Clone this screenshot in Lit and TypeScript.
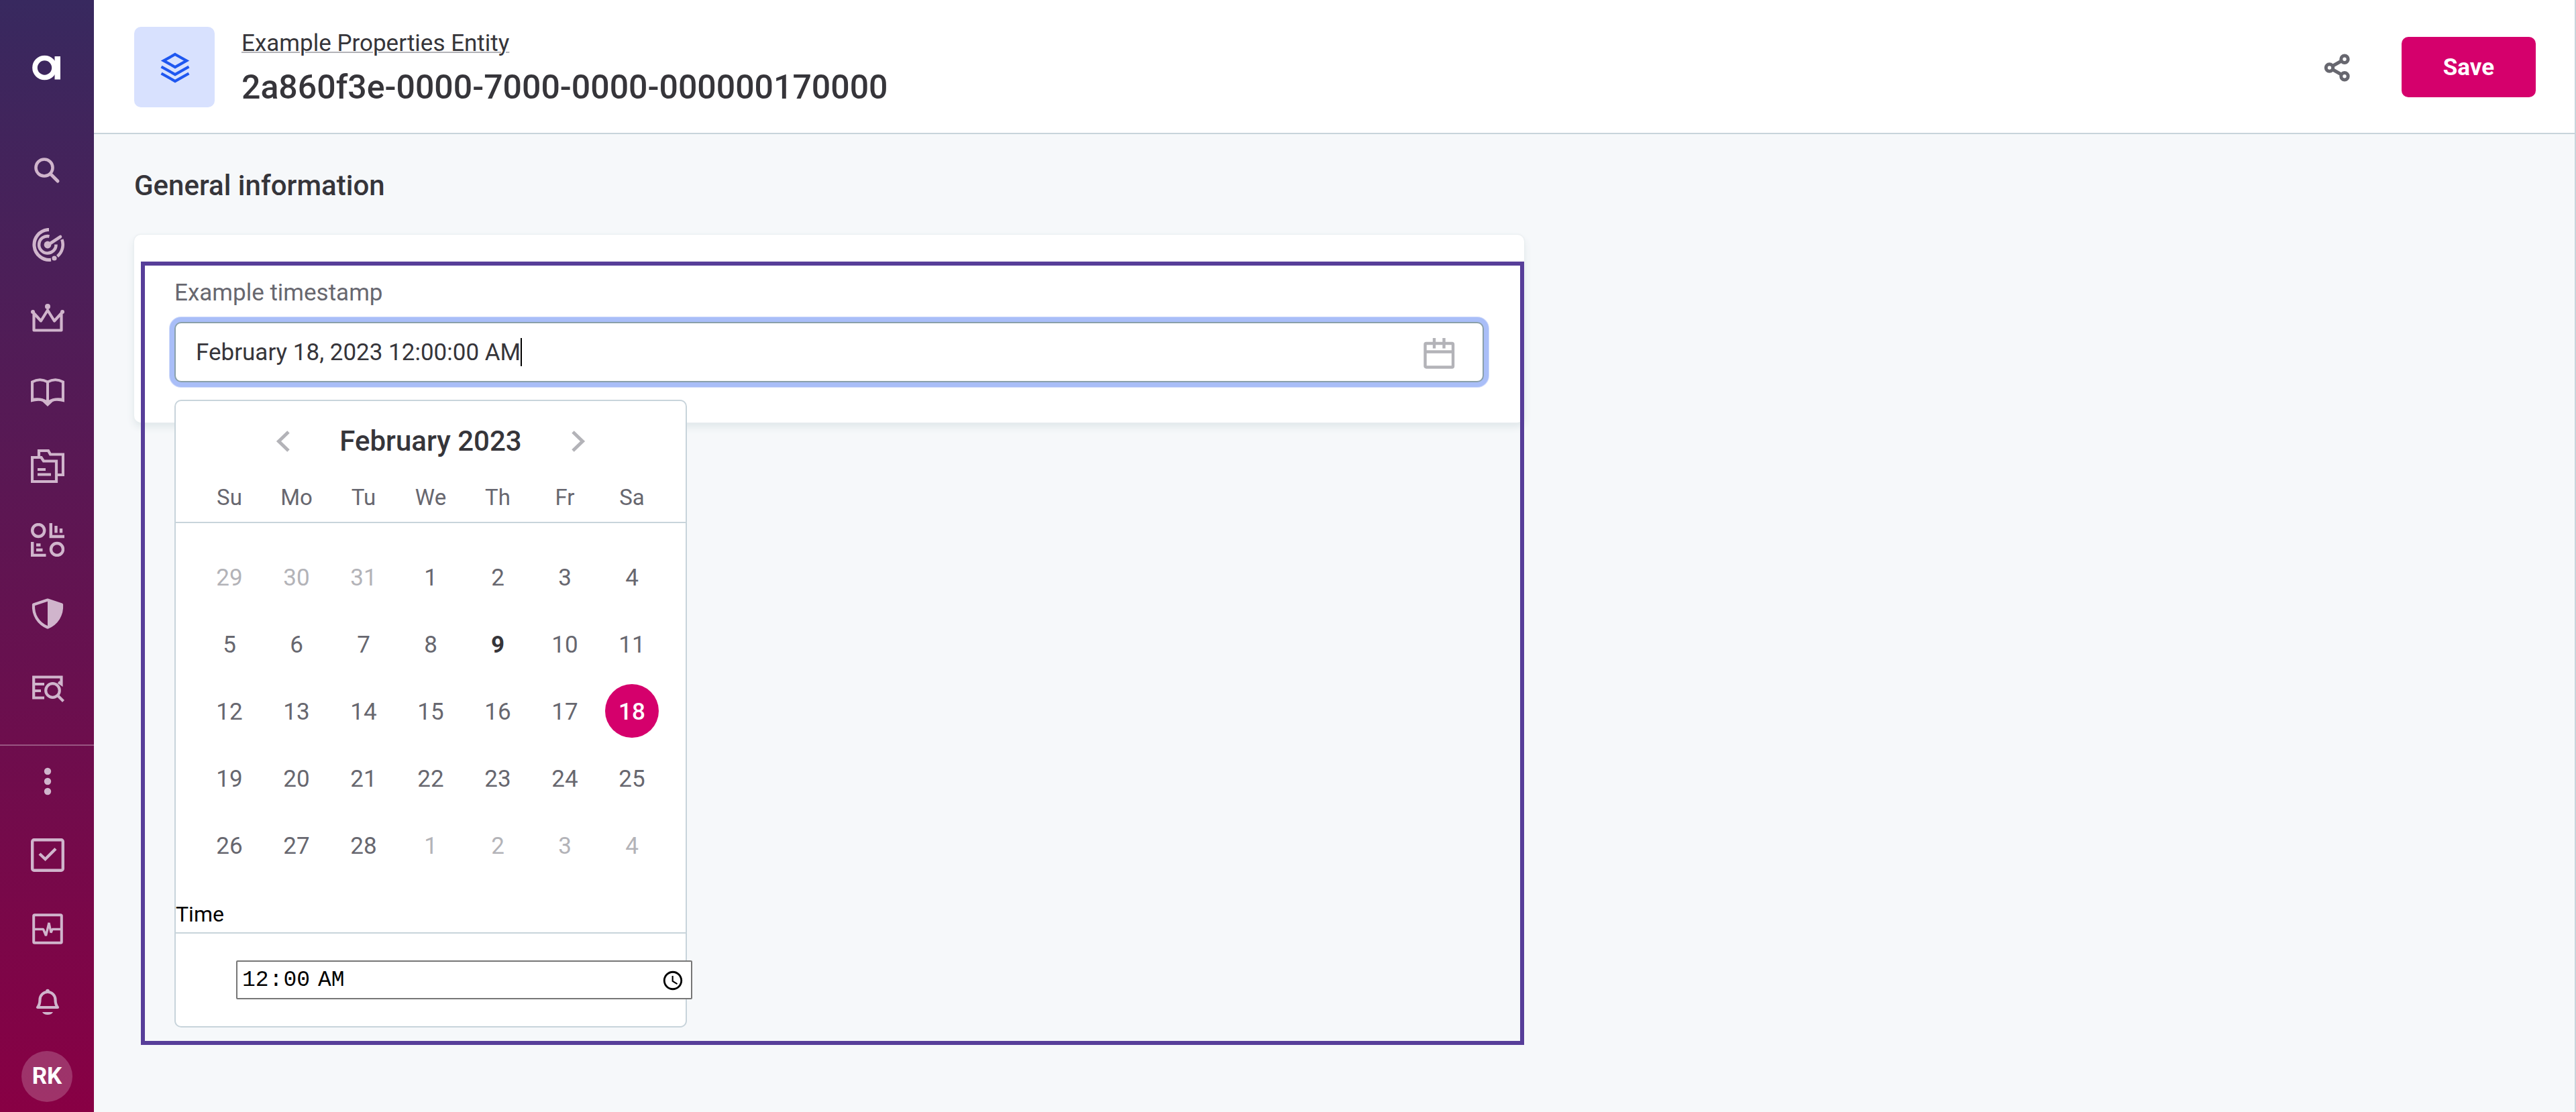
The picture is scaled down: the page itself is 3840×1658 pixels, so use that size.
import { LitElement, html, css, svg } from "lit";
import { customElement, state, query } from "lit/decorators.js";
import { classMap } from "lit/directives/class-map.js";
import { styleMap } from "lit/directives/style-map.js";

/* Every rail icon is drawn on a 50 x 50 grid. */
const icons = {
  search: svg`
    <circle cx="20" cy="20" r="12.5" fill="none" stroke="currentColor" stroke-width="4.6" />
    <path d="M29 29 L40 40" fill="none" stroke="currentColor" stroke-width="5" stroke-linecap="round" />`,
  radar: svg`
    <path d="M27 2.5 H25 A22.5 22.5 0 1 0 30 47.3" fill="none" stroke="currentColor" stroke-width="5" />
    <path d="M46.3 17 A22.5 22.5 0 0 1 39.5 42.2" fill="none" stroke="currentColor" stroke-width="4.6" />
    <path d="M27.5 12.4 A12.7 12.7 0 1 0 37.5 24.5" fill="none" stroke="currentColor" stroke-width="4.6" />
    <path d="M25 25.5 L44 13" fill="none" stroke="currentColor" stroke-width="4.6" stroke-linecap="round" />
    <circle cx="25" cy="25" r="5.4" fill="currentColor" />
    <circle cx="35" cy="45" r="3.6" fill="currentColor" />`,
  crown: svg`
    <path d="M4.5 17 V42.5 H45.5 V17 L35 28.5 L25 12.5 L15 28.5 Z" fill="none" stroke="currentColor" stroke-width="4.2" stroke-linejoin="round" />
    <circle cx="25" cy="7" r="4" fill="currentColor" />
    <circle cx="3" cy="15" r="3" fill="currentColor" />
    <circle cx="47" cy="15" r="3" fill="currentColor" />`,
  book: svg`
    <path d="M2 37 V9.5 Q13.5 3 25 9.5 Q36.5 3 48 9.5 V37" fill="none" stroke="currentColor" stroke-width="4.2" />
    <path d="M25 9.5 V40" fill="none" stroke="currentColor" stroke-width="4" />
    <path d="M0 39.5 V34.5 Q14 31 25 37.5 Q36 31 50 34.5 V39.5 Q38 36.5 32.5 39 L25 46 L17.5 39 Q12 36.5 0 39.5 Z" fill="currentColor" />`,
  folders: svg`
    <path d="M2 12 H15.5 L19 17.5 H38 V48 H2 Z" fill="none" stroke="currentColor" stroke-width="4.2" />
    <path d="M12 12 V2 H26 L29 7.500 H48 V38 H39" fill="none" stroke="currentColor" stroke-width="4.2" />
    <path d="M10 30 H22 M10 37.5 H30" fill="none" stroke="currentColor" stroke-width="4.2" />`,
  charts: svg`
    <circle cx="11.2" cy="11" r="9" fill="none" stroke="currentColor" stroke-width="4.4" />
    <circle cx="39" cy="39" r="9" fill="none" stroke="currentColor" stroke-width="4.4" />
    <path d="M29.8 0 V20 H50 M2.2 28 V48 H22.5" fill="none" stroke="currentColor" stroke-width="4.4" />
    <path d="M37.5 4 V14.5 M45 8 V14.5 M8 32.5 H14.5 M8 40 H17.5" fill="none" stroke="currentColor" stroke-width="4.4" />`,
  shield: svg`
    <path d="M25 4.500 L46 11.500 C47 27 39 39.500 25 45.500 C11 39.500 3 27 4 11.500 Z" fill="none" stroke="currentColor" stroke-width="4.2" stroke-linejoin="round" />
    <path d="M25 4.5 L46 11.5 C47 27 39 39.5 25 45.5 Z" fill="currentColor" />`,
  inspect: svg`
    <g fill="none" stroke="currentColor" stroke-width="4.2">
      <path d="M20 40.5 H4.2 V9.5 H45.5 V20 L41 17" />
      <path d="M5 20 H20 M5 30 H15" />
      <circle cx="32.5" cy="29.500" r="10.300" />
      <path d="M39.500 36.500 L48.500 45.500" />
    </g>`,
  more: svg`
    <circle cx="25" cy="10" r="5.2" fill="currentColor" />
    <circle cx="25" cy="25" r="5.2" fill="currentColor" />
    <circle cx="25" cy="40" r="5.2" fill="currentColor" />`,
  tasks: svg`
    <g fill="none" stroke="currentColor" stroke-width="4.4">
      <rect x="2.2" y="2.2" width="45.6" height="45.6" rx="2.5" />
      <path d="M13 23 L21.500 31 L37 15.500" />
    </g>`,
  pulse: svg`
    <rect x="4.2" y="4.2" width="41.6" height="41.6" rx="1.5" fill="none" stroke="currentColor" stroke-width="4" />
    <path d="M5 25.5 H18.500 L22.500 35 L27 16 L30 30.500 L32 25.500 H45" fill="none" stroke="currentColor" stroke-width="3.4" stroke-linejoin="bevel" />`,
  bell: svg`
    <path d="M10 32 H40 C37.5 29 36.500 26.500 36.500 20.500 A11.500 11.500 0 0 0 13.500 20.500 C13.500 26.500 12.500 29 10 32 Z" fill="none" stroke="currentColor" stroke-width="4.2" stroke-linejoin="round" />
    <circle cx="25" cy="7.5" r="2.8" fill="currentColor" />
    <path d="M17 39 H33 A8.500 6 0 0 1 17 39 Z" fill="currentColor" />`,
};

type IconName = keyof typeof icons;

const primaryNav: { icon: IconName; label: string }[] = [
  { icon: "search", label: "Search" },
  { icon: "radar", label: "Discover" },
  { icon: "crown", label: "Governance" },
  { icon: "book", label: "Glossary" },
  { icon: "folders", label: "Catalog" },
  { icon: "charts", label: "Reports" },
  { icon: "shield", label: "Policies" },
  { icon: "inspect", label: "Data quality" },
];

const secondaryNav: { icon: IconName; label: string }[] = [
  { icon: "more", label: "More" },
  { icon: "tasks", label: "Tasks" },
  { icon: "pulse", label: "Processing" },
  { icon: "bell", label: "Notifications" },
];

@customElement("side-rail")
export class SideRail extends LitElement {
  static styles = css`
    :host {
      display: flex;
      flex-direction: column;
      flex: 0 0 140px;
      overflow: hidden;
      background: linear-gradient(#38295f, #880044);
      color: #d0b5cc;
    }
    .logo {
      display: grid;
      place-items: center;
      height: 200px;
      color: #fff;
    }
    .group {
      display: flex;
      flex-direction: column;
    }
    .secondary {
      margin-top: auto;
      box-shadow: inset 0 2px rgba(255, 255, 255, 0.3);
    }
    .item {
      display: grid;
      place-items: center;
      height: 110px;
      padding: 0 0 0 2px;
      border: 0;
      background: none;
      color: inherit;
      text-decoration: none;
      cursor: pointer;
    }
    .glyph {
      width: 50px;
      height: 50px;
    }
    .account {
      height: 108px;
      padding: 2px 0 0;
    }
    .avatar {
      display: grid;
      place-items: center;
      width: 76px;
      height: 76px;
      border-radius: 50%;
      background: rgba(255, 255, 255, 0.2);
      color: #fff;
      font: 700 35px/40px Roboto, sans-serif;
    }
  `;

  render() {
    return html`
      <a class="logo" href="#" aria-label="Home">
        <svg class="glyph" viewBox="0 0 50 50">
          <circle cx="21.500" cy="26" r="14.5" fill="none" stroke="currentColor" stroke-width="7.6" />
          <path d="M36.500 9 H45 V43.500 H36.500 Z" fill="currentColor" />
        </svg>
      </a>
      <nav class="group" aria-label="Main">
        ${primaryNav.map(
          (n) => html`<a class="item" href="#" aria-label=${n.label}>
            <svg class="glyph" viewBox="0 0 50 50">${icons[n.icon]}</svg>
          </a>`
        )}
      </nav>
      <div class="group secondary">
        ${secondaryNav.map(
          (n) => html`<button class="item" type="button" aria-label=${n.label}>
            <svg class="glyph" viewBox="0 0 50 50">${icons[n.icon]}</svg>
          </button>`
        )}
        <button class="item account" type="button"><span class="avatar">RK</span></button>
      </div>
    `;
  }
}

@customElement("page-header")
export class PageHeader extends LitElement {
  static styles = css`
    :host {
      box-sizing: border-box;
      display: flex;
      align-items: center;
      gap: 40px;
      height: 200px;
      padding: 2px 58px 0 60px;
      background: #fff;
      border-bottom: 2px solid #c8d4db;
      color: #36353a;
    }
    .tile {
      display: grid;
      place-items: center;
      width: 120px;
      height: 120px;
      border-radius: 10px;
      background: #d8e1fe;
      color: #1f57f0;
    }
    .tile svg {
      width: 50px;
      height: 50px;
    }
    .titles {
      flex: 1;
      min-width: 0;
    }
    .type {
      display: inline-block;
      color: inherit;
      font-size: 35px;
      line-height: 50px;
      text-decoration: underline;
      text-decoration-color: #b3b3b8;
      text-decoration-thickness: 2px;
    }
    .name {
      margin: 10px 0 0;
      font-size: 50px;
      line-height: 60px;
      font-weight: 500;
    }
    .share {
      display: grid;
      padding: 0;
      margin-right: 30px;
      border: 0;
      background: none;
      color: #67676f;
      cursor: pointer;
    }
    .share svg {
      width: 50px;
      height: 50px;
    }
    .save {
      width: 200px;
      height: 90px;
      padding: 2px 0 0;
      border: 0;
      border-radius: 10px;
      background: #d5006c;
      color: #fff;
      font: 700 35px/50px Roboto, sans-serif;
      cursor: pointer;
    }
  `;

  render() {
    return html`
      <div class="tile">
        <svg viewBox="0 0 50 50" fill="none" stroke="currentColor" stroke-width="4.2">
          <path d="M26 6 L43 15.5 L26 25 L9 15.5 Z" />
          <path d="M5.500 24.500 L26 36 L46.500 24.500" />
          <path d="M5.500 34.500 L26 46 L46.500 34.500" />
        </svg>
      </div>
      <div class="titles">
        <a class="type" href="#">Example Properties Entity</a>
        <h1 class="name">2a860f3e-0000-7000-0000-000000170000</h1>
      </div>
      <button class="share" type="button" aria-label="Share">
        <svg viewBox="0 0 50 50" fill="none" stroke="currentColor" stroke-width="5">
          <path d="M12.500 26 L35 13.300 M12.500 26 L35 38.700" />
          <g fill="#fff">
            <circle cx="12.5" cy="26" r="5.2" />
            <circle cx="35" cy="13.3" r="5.2" />
            <circle cx="35" cy="38.7" r="5.2" />
          </g>
        </svg>
      </button>
      <button class="save" type="button">Save</button>
    `;
  }
}

const weekdays = ["Su", "Mo", "Tu", "We", "Th", "Fr", "Sa"];

/* The five weeks that show February 2023, from January 29 to March 4. */
const weeks = Array.from({ length: 5 }, (_, w) =>
  Array.from({ length: 7 }, (_, d) => {
    const date = new Date(2023, 0, 29 + w * 7 + d);
    return { day: date.getDate(), outside: date.getMonth() !== 1 };
  })
);

@customElement("calendar-popup")
export class CalendarPopup extends LitElement {
  @state() private selected = 18;
  private today = 9;

  static styles = css`
    :host {
      box-sizing: border-box;
      display: block;
      width: 764px;
      border: 2px solid #c8d4db;
      border-radius: 10px;
      background: #fff;
      color: #36353a;
    }
    .month {
      display: flex;
      align-items: center;
      justify-content: center;
      gap: 58px;
      padding-top: 30px;
    }
    .title {
      margin: 0;
      font-size: 42px;
      line-height: 60px;
      font-weight: 500;
    }
    .step {
      display: grid;
      padding: 0;
      border: 0;
      background: none;
      color: #b3b3b8;
      cursor: pointer;
    }
    .step svg {
      width: 50px;
      height: 50px;
    }
    .grid {
      width: 100%;
      border-collapse: collapse;
      table-layout: fixed;
    }
    .head,
    .body {
      display: block;
      padding: 0 30px;
    }
    .head {
      padding-top: 30px;
      padding-bottom: 12px;
      border-bottom: 2px solid #c8d4db;
    }
    .body {
      padding-top: 30px;
    }
    .week {
      display: grid;
      grid-template-columns: repeat(7, 1fr);
    }
    .weekday {
      padding: 0;
      color: #67676f;
      font: 400 33px/48px Roboto, sans-serif;
    }
    .cell {
      display: grid;
      place-items: center;
      height: 100px;
      padding: 0;
    }
    .day {
      box-sizing: border-box;
      width: 80px;
      height: 80px;
      padding: 4px 0 0;
      border: 0;
      border-radius: 50%;
      background: none;
      color: #67676f;
      font: 400 35px/50px Roboto, sans-serif;
      cursor: pointer;
    }
    .outside {
      color: #b3b3b8;
    }
    .today {
      color: #36353a;
      font-weight: 700;
    }
    .selected {
      background: #d5006c;
      color: #fff;
      font-weight: 500;
    }
    .caption {
      display: block;
      margin-top: 30px;
      padding-bottom: 4px;
      border-bottom: 2px solid #c8d4db;
      color: #000;
      font-size: 32px;
      line-height: 46px;
    }
    .time {
      box-sizing: border-box;
      display: block;
      width: 680px;
      height: 58px;
      margin: 40px 0 40px 90px;
      padding: 2px 6px 0;
      border: 2px solid #767676;
      border-radius: 2px;
      background: #fff;
      color: #000;
      font: 33px/50px "Liberation Mono", monospace;
    }
  `;

  render() {
    return html`
      <div class="month">
        <button class="step" type="button" aria-label="Previous month">
          <svg viewBox="0 0 50 50" fill="none" stroke="currentColor" stroke-width="5">
            <path d="M32 11 L17.500 25 L32 39" />
          </svg>
        </button>
        <h3 class="title">February 2023</h3>
        <button class="step" type="button" aria-label="Next month">
          <svg viewBox="0 0 50 50" fill="none" stroke="currentColor" stroke-width="5">
            <path d="M18 11 L32.500 25 L18 39" />
          </svg>
        </button>
      </div>
      <table class="grid">
        <thead class="head">
          <tr class="week">
            ${weekdays.map((d) => html`<th class="weekday" scope="col">${d}</th>`)}
          </tr>
        </thead>
        <tbody class="body">
          ${weeks.map(
            (week) => html`<tr class="week">
              ${week.map(({ day, outside }) => {
                const classes = {
                  day: true,
                  outside,
                  today: !outside && day === this.today,
                  selected: !outside && day === this.selected,
                };
                return html`<td class="cell">
                  <button
                    type="button"
                    class=${classMap(classes)}
                    @click=${() => {
                      if (!outside) this.selected = day;
                    }}
                  >${day}</button>
                </td>`;
              })}
            </tr>`
          )}
        </tbody>
      </table>
      <label class="caption" for="time">Time</label>
      <input class="time" id="time" type="time" value="00:00" />
    `;
  }
}

@customElement("timestamp-field")
export class TimestampField extends LitElement {
  @state() private caret = 0;
  @query(".input") private input!: HTMLInputElement;

  static styles = css`
    :host {
      display: block;
      position: relative;
    }
    .label {
      display: block;
      padding-top: 2px;
      margin-bottom: 18px;
      color: #67676f;
      font-size: 35px;
      line-height: 50px;
    }
    .box {
      position: relative;
      display: flex;
      align-items: center;
      box-sizing: border-box;
      height: 90px;
      padding: 0 40px 0 30px;
      border: 2px solid #8aa0aa;
      border-radius: 10px;
      background: #fff;
      box-shadow: 0 0 0 7px #a9bef8, 0 0 0 8px #d0dbfb;
    }
    .input {
      flex: 1;
      min-width: 0;
      padding: 2px 0 0;
      border: 0;
      outline: 0;
      background: none;
      color: #36353a;
      caret-color: transparent;
      font: 400 35px/50px Roboto, sans-serif;
    }
    .caret {
      position: absolute;
      width: 2px;
      height: 42px;
      margin-left: 30px;
      background: #000;
    }
    .toggle {
      display: grid;
      padding: 0;
      border: 0;
      background: none;
      color: #b3b3b8;
      cursor: pointer;
    }
    .toggle svg {
      width: 50px;
      height: 50px;
    }
    .popup {
      position: absolute;
      z-index: 1;
      top: 100%;
      left: 0;
      margin-top: 26px;
    }
  `;

  firstUpdated() {
    this.placeCaret();
  }

  private placeCaret() {
    const ctx = document.createElement("canvas").getContext("2d")!;
    ctx.font = "400 35px Roboto, sans-serif";
    this.caret = Math.floor(ctx.measureText(this.input.value).width);
  }

  render() {
    return html`
      <label class="label" for="timestamp">Example timestamp</label>
      <div class="box">
        <input
          class="input"
          id="timestamp"
          type="text"
          value="February 18, 2023 12:00:00 AM"
          @input=${this.placeCaret}
        />
        <span class="caret" style=${styleMap({ left: `${this.caret}px` })}></span>
        <button class="toggle" type="button" aria-label="Open calendar">
          <svg viewBox="0 0 50 50" fill="none" stroke="currentColor" stroke-width="4.4">
            <rect x="4.500" y="12" width="41.500" height="35.500" rx="1.500" />
            <path d="M4.500 24.500 H46 M18 4 V19.500 M32.500 4 V19.500" />
          </svg>
        </button>
      </div>
      <calendar-popup class="popup"></calendar-popup>
    `;
  }
}

@customElement("app-root")
export class AppRoot extends LitElement {
  static styles = css`
    :host {
      display: flex;
      min-height: 100vh;
      overflow: hidden;
      background: #f6f8fa;
      color: #36353a;
      font-family: Roboto, sans-serif;
    }
    .page {
      flex: 1;
      min-width: 0;
      border-right: 2px solid #c8d4db;
    }
    .content {
      padding: 52px 60px;
    }
    .heading {
      margin: 0 0 48px;
      font-size: 42px;
      line-height: 50px;
      font-weight: 500;
    }
    .card {
      position: relative;
      box-sizing: border-box;
      max-width: 2072px;
      padding: 60px;
      border-radius: 10px;
      background: #fff;
      box-shadow: 0 0 2px 1px #e9eef0, 0 6px 12px #dfe6e9;
    }
    .highlight {
      position: absolute;
      top: 40px;
      left: 10px;
      right: 0;
      height: 1156px;
      border: 6px solid #573e99;
      pointer-events: none;
    }
  `;

  render() {
    return html`
      <side-rail></side-rail>
      <main class="page">
        <page-header></page-header>
        <section class="content">
          <h2 class="heading">General information</h2>
          <div class="card">
            <timestamp-field></timestamp-field>
            <div class="highlight"></div>
          </div>
        </section>
      </main>
    `;
  }
}
